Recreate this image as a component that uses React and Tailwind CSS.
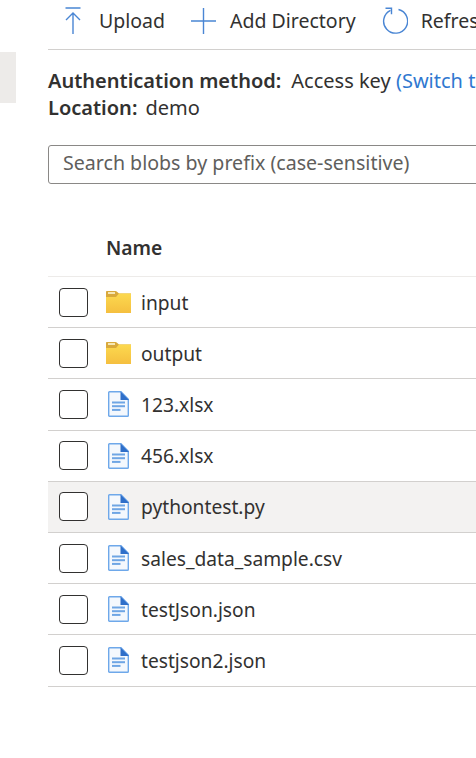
const files = [
  { name: "input", type: "folder" },
  { name: "output", type: "folder" },
  { name: "123.xlsx", type: "file" },
  { name: "456.xlsx", type: "file" },
  { name: "pythontest.py", type: "file", hover: true },
  { name: "sales_data_sample.csv", type: "file" },
  { name: "testJson.json", type: "file" },
  { name: "testjson2.json", type: "file" },
];

function FolderIcon() {
  return (
    <svg width="25" height="22" viewBox="0 0 25 22" className="ml-[18px]">
      <defs>
        <linearGradient id="folderFill" x1="0" y1="0" x2="0" y2="1">
          <stop offset="0" stopColor="#fcd94f" />
          <stop offset="1" stopColor="#f5bf3f" />
        </linearGradient>
      </defs>
      <path d="M0 1c0-.6.400-1 1-1h8.500c.5 0 .9.200 1.200.5L13 2.500h12V7H0z" fill="#d9a93c" />
      <path d="M0 6h10l3-3.500h12V22H0z" fill="url(#folderFill)" />
      <rect x="2" y="1" width="7" height="2" fill="#f6e7b4" />
    </svg>
  );
}

function FileIcon() {
  return (
    <svg width="21" height="26" viewBox="0 0 21 26" className="ml-[20px]">
      <path d="M1.500.7h11.500l7.300 7.600v16.200c0 .5-.3.800-.8.800H1.500c-.5 0-.8-.3-.8-.8V1.500c0-.5.300-.8.800-.8z" fill="#f4f8fd" stroke="#6ea8ea" strokeWidth="1.400" />
      <path d="M12.500.5L21 9h-8.500z" fill="#2f6fc9" />
      <rect x="4" y="10.500" width="13" height="2" fill="#6ea5e4" />
      <rect x="4" y="14.200" width="13" height="2" fill="#6ea5e4" />
      <rect x="4" y="17.900" width="8.500" height="2" fill="#6ea5e4" />
    </svg>
  );
}

function ToolButton({ icon, label, className }) {
  return (
    <div className={`flex items-center ${className}`}>
      {icon}
      <span className="text-[19.5px] text-[#323130]">{label}</span>
    </div>
  );
}

export default function App() {
  return (
    <div className="flex h-[758px] w-[476px] overflow-hidden bg-white text-[#323130] font-['Noto_Sans','Open_Sans',sans-serif]">
      <div className="w-12 shrink-0 pt-[52px]">
        <div className="h-[51px] w-4 bg-[#edebe9]" />
      </div>

      <div className="min-w-0 flex-1 whitespace-nowrap">
        <div className="flex h-[50px] items-center border-b border-[#d2d0ce] pb-2 pl-4">
          <ToolButton
            className="mr-[26px]"
            label="Upload"
            icon={
              <svg width="18" height="28" viewBox="0 0 18 28" fill="none" stroke="#4a86d4" strokeWidth="1.400" className="mr-[17px]">
                <path d="M1.500 1h15M9 27V6M2 13l7-7 7 7" />
              </svg>
            }
          />
          <ToolButton
            className="mr-[26px]"
            label="Add Directory"
            icon={
              <svg width="25" height="26" viewBox="0 0 25 26" fill="none" stroke="#4a86d4" strokeWidth="1.400" className="mr-[14px]">
                <path d="M0 13h25M12.500 0v26" />
              </svg>
            }
          />
          <ToolButton
            label="Refresh"
            icon={
              <svg width="26" height="27" viewBox="0 0 26 27" fill="none" stroke="#4a86d4" strokeWidth="1.400" className="mr-[13px]">
                <path d="M16.500 2.500a12 12 0 1 1-8 .8" />
                <path d="M3.500 1.200h6v6" />
              </svg>
            }
          />
        </div>

        <div className="mt-[17px] text-[20px] leading-[27px]">
          <div>
            <span className="mr-[10px] font-semibold">Authentication method:</span>
            Access key <span className="text-[#2f78d0]">(Switch to Azure AD)</span>
          </div>
          <div>
            <span className="mr-2 font-semibold">Location:</span>
            demo
          </div>
        </div>

        <div className="mt-[24px] h-[39px] w-[460px] rounded-[3px] border border-[#8a8886] pl-[14px] text-[19.6px] leading-[34px] text-[#605e5c]">
          Search blobs by prefix (case-sensitive)
        </div>

        <div className="mt-[27px] flex h-[66px] items-center border-b border-[#edebe9] pl-[58px] pt-[10px] text-[19.3px] font-semibold">
          Name
        </div>

        {files.map((f) => (
          <div
            key={f.name}
            className={`flex h-[51.2px] items-center border-b border-[#d2d0ce] ${f.hover ? "bg-[#f3f2f1]" : ""}`}
          >
            <div className="ml-[11px] h-[29px] w-[29px] shrink-0 rounded-[4px] border border-[#323130] bg-white" />
            <div className="flex w-[53px] shrink-0">
              {f.type === "folder" ? <FolderIcon /> : <FileIcon />}
            </div>
            <span className="pt-[2px] text-[19.2px]">{f.name}</span>
          </div>
        ))}
      </div>
    </div>
  );
}
